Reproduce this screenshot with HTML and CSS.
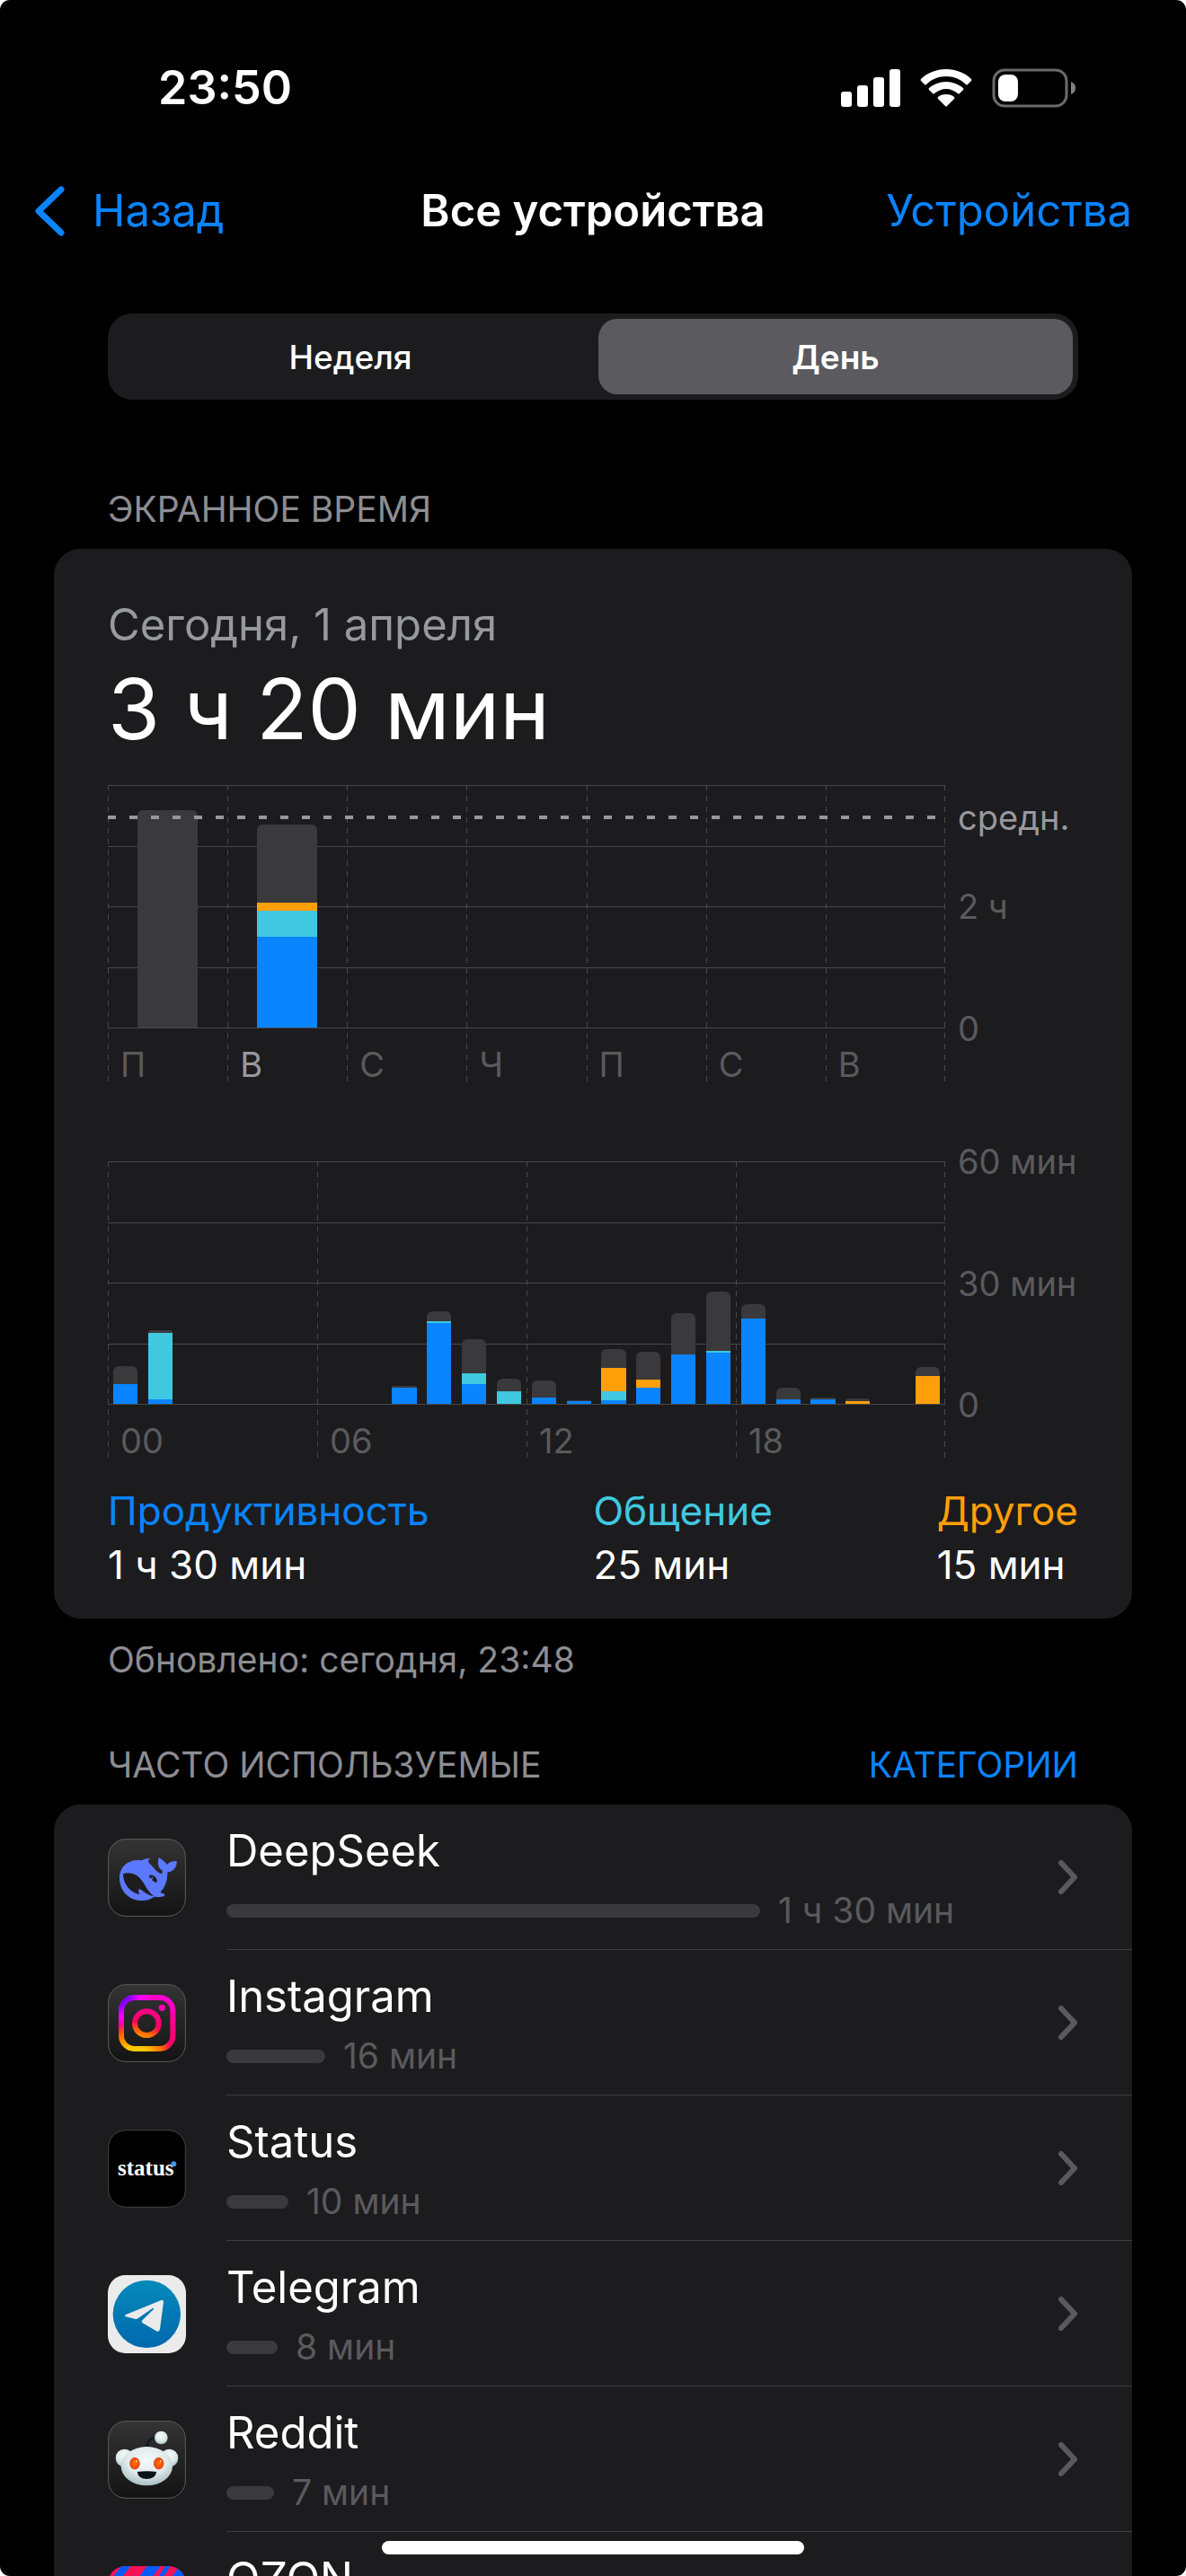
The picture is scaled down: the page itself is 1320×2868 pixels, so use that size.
FILE: index.html
```
<!DOCTYPE html>
<html lang="ru">
	<head>
		<meta charset="utf-8">
		<meta name="viewport" content="width=device-width, initial-scale=1">
		<title>Экранное время</title>
		<link rel="stylesheet" href="styles.css">
	</head>
	<body>
		<div class="screen">
		<div class="status">
			<span class="time">23:50</span>
			<div class="status-icons">
				<svg class="signal" viewBox="0 0 66 42">
					<rect x="0" y="25" width="12" height="17" rx="3"/>
					<rect x="18" y="18" width="12" height="24" rx="3"/>
					<rect x="36" y="9" width="12" height="33" rx="3"/>
					<rect x="54" y="0" width="12" height="42" rx="3"/>
				</svg>
				<svg class="wifi" viewBox="0 0 58 42">
					<path d="M29 0C40 0 50 4 57 11Q58 12 57 13L53 17Q52 18 51 17C45 11 37 8 29 8S13 11 7 17Q6 18 5 17L1 13Q0 12 1 11C8 4 18 0 29 0Z"/>
					<path d="M29 14C36 14 43 17 48 21Q49 22 48 23L44 27Q43 28 42 27C38 24 34 22 29 22S20 24 16 27Q15 28 14 27L10 23Q9 22 10 21C15 17 22 14 29 14Z"/>
					<path d="M29 28C33 28 36 29 38 31Q39 32 38 33L30 41Q29 42 28 41L20 33Q19 32 20 31C22 29 25 28 29 28Z"/>
				</svg>
				<svg class="battery" viewBox="0 0 94 44">
					<rect x="2" y="2" width="81" height="40" rx="12" fill="none" stroke="#6b6b6b" stroke-width="3"/>
					<rect x="7" y="7" width="22" height="30" rx="8"/>
					<path d="M88 15C92 17 93 19 93 22S92 27 88 29Z" fill="#808080"/>
				</svg>
			</div>
		</div>

		<header class="nav">
			<a href="#" class="back">
				<svg viewBox="0 0 34 56"><path d="M30 4L5 28L30 52"/></svg>Назад
			</a>
			<h1>Все устройства</h1>
			<a href="#" class="devices">Устройства</a>
		</header>

		<main>
			<div class="tabs">
				<button type="button">Неделя</button>
				<button type="button" class="ac">День</button>
			</div>

			<div class="head"><h2>ЭКРАННОЕ ВРЕМЯ</h2></div>
			<section class="card summary">
				<p class="date">Сегодня, 1 апреля</p>
				<p class="total">3 ч 20 мин</p>

				<div class="chart week">
					<div class="lines"><i></i><i></i><i></i><i></i></div>
					<div class="cols">
						<span>П</span><span class="ac">В</span><span>С</span><span>Ч</span><span>П</span><span>С</span><span>В</span>
					</div>
					<div class="bars" id="week"></div>
					<div class="axis"><span>2 ч</span><span>0</span></div>
					<div class="avg"><span>средн.</span></div>
				</div>

				<div class="chart day">
					<div class="lines"><i></i><i></i><i></i><i></i></div>
					<div class="cols">
						<span>00</span><span>06</span><span>12</span><span>18</span>
					</div>
					<div class="bars" id="day"></div>
					<div class="axis"><span>60 мин</span><span>30 мин</span><span>0</span></div>
				</div>

				<dl class="legend">
					<div><dt class="blue">Продуктивность</dt><dd>1 ч 30 мин</dd></div>
					<div><dt class="cyan">Общение</dt><dd>25 мин</dd></div>
					<div><dt class="orange">Другое</dt><dd>15 мин</dd></div>
				</dl>
			</section>
			<p class="updated">Обновлено: сегодня, 23:48</p>

			<div class="head often"><h2>ЧАСТО ИСПОЛЬЗУЕМЫЕ</h2><a href="#">КАТЕГОРИИ</a></div>
			<section class="card apps">
				<a href="#" class="app">
					<svg class="icon" viewBox="0 0 261 261">
						<defs>
							<linearGradient id="dark" x1="0" y1="0" x2="0" y2="1"><stop offset="0" stop-color="#343434"/><stop offset="1" stop-color="#131313"/></linearGradient>
						</defs>
						<rect x="2" y="2" width="257" height="257" rx="58" fill="url(#dark)" stroke="#5c5c5c" stroke-width="3"/>
						<path fill="#5b78ff" d="M141 66C131 65 122 68 113 73C73 66 39 91 39 131C39 175 72 207 113 207C130 207 144 202 156 194C166 196 178 196 187 193C192 191 191 186 186 184L175 180C191 163 200 138 199 113C220 110 232 94 230 75C218 74 205 78 197 87C191 74 180 72 172 62C164 76 166 97 182 107C183 114 181 118 177 117C160 109 151 93 139 83C133 78 134 72 141 66Z"/>
						<path fill="#1d1d1d" d="M51 118C72 111 93 117 107 132C124 150 132 178 153 191C135 193 119 173 104 168C100 175 104 184 109 187C74 182 51 151 51 118Z"/>
						<path fill="#1d1d1d" d="M138 124C149 116 166 130 165 145C158 148 152 143 148 139L150 130C147 125 142 126 142 132C138 131 137 127 138 124Z"/>
						<circle cx="144" cy="130" r="3" fill="#1d1d1d"/>
					</svg>
					<div class="info">
						<span class="name">DeepSeek</span>
						<span class="usage"><i style="width:594px"></i>1 ч 30 мин</span>
					</div>
					<svg class="arrow" viewBox="0 0 22 38"><path d="M3 3L18 19L3 35"/></svg>
				</a>
				<a href="#" class="app">
					<svg class="icon" viewBox="0 0 261 261">
						<defs>
							<radialGradient id="ig" gradientUnits="userSpaceOnUse" cx="95" cy="245" r="235">
								<stop offset="0" stop-color="#ffd000"/><stop offset=".18" stop-color="#ffc400"/><stop offset=".38" stop-color="#ff6a00"/><stop offset=".52" stop-color="#ff0060"/><stop offset=".78" stop-color="#ff00a0"/><stop offset="1" stop-color="#ff00e0"/>
							</radialGradient>
							<radialGradient id="ig2" gradientUnits="userSpaceOnUse" cx="40" cy="40" r="115">
								<stop offset="0" stop-color="#6a00ff"/><stop offset=".3" stop-color="#8c00ff"/><stop offset=".6" stop-color="#f0f"/><stop offset="1" stop-color="#f0f" stop-opacity="0"/>
							</radialGradient>
						</defs>
						<rect x="2" y="2" width="257" height="257" rx="58" fill="url(#dark)" stroke="#5c5c5c" stroke-width="3"/>
						<g fill="none" stroke="url(#ig)" stroke-width="18">
							<rect x="45" y="45" width="172" height="171" rx="44"/>
							<circle cx="130" cy="131" r="40"/>
						</g>
						<rect x="45" y="45" width="172" height="171" rx="44" fill="none" stroke="url(#ig2)" stroke-width="18"/>
						<circle cx="181" cy="79" r="11" fill="#ff00b8"/>
					</svg>
					<div class="info">
						<span class="name">Instagram</span>
						<span class="usage"><i style="width:110px"></i>16 мин</span>
					</div>
					<svg class="arrow" viewBox="0 0 22 38"><path d="M3 3L18 19L3 35"/></svg>
				</a>
				<a href="#" class="app">
					<svg class="icon" viewBox="0 0 261 261">
						<rect x="2" y="2" width="257" height="257" rx="58" fill="#000" stroke="#444" stroke-width="3"/>
						<text class="logo" x="33" y="152">status</text>
						<circle cx="220" cy="115" r="9" fill="#3a96f0"/>
					</svg>
					<div class="info">
						<span class="name">Status</span>
						<span class="usage"><i style="width:69px"></i>10 мин</span>
					</div>
					<svg class="arrow" viewBox="0 0 22 38"><path d="M3 3L18 19L3 35"/></svg>
				</a>
				<a href="#" class="app">
					<svg class="icon" viewBox="0 0 261 261">
						<defs>
							<linearGradient id="tg" x1="0" y1="0" x2="0" y2="1"><stop offset="0" stop-color="#058abb"/><stop offset="1" stop-color="#0068ad"/></linearGradient>
						</defs>
						<rect width="261" height="261" rx="59" fill="#ebebeb"/>
						<circle cx="130" cy="130" r="113" fill="url(#tg)"/>
						<path fill="#ebebeb" d="M60 132L178 84Q187 81 186 91L174 180Q172 192 162 187L116 160Q111 156 115 151L153 114Q155 109 149 111L100 145Q96 148 90 146L61 139Q54 136 60 132Z"/>
					</svg>
					<div class="info">
						<span class="name">Telegram</span>
						<span class="usage"><i style="width:57px"></i>8 мин</span>
					</div>
					<svg class="arrow" viewBox="0 0 22 38"><path d="M3 3L18 19L3 35"/></svg>
				</a>
				<a href="#" class="app">
					<svg class="icon" viewBox="0 0 261 261">
						<defs>
							<radialGradient id="snoo" cx=".5" cy=".35" r=".65"><stop offset="0" stop-color="#f4f9f9"/><stop offset=".6" stop-color="#dfeaeb"/><stop offset="1" stop-color="#a9bfc4"/></radialGradient>
							<radialGradient id="eye" cx=".5" cy=".5" r=".5"><stop offset="0" stop-color="#ff7a00"/><stop offset="1" stop-color="#ff3c00"/></radialGradient>
						</defs>
						<rect x="2" y="2" width="257" height="257" rx="58" fill="url(#dark)" stroke="#5c5c5c" stroke-width="3"/>
						<circle cx="56" cy="125" r="30" fill="url(#snoo)"/>
						<circle cx="205" cy="125" r="30" fill="url(#snoo)"/>
						<path d="M130 92C131 68 142 57 164 56" fill="none" stroke="#0b1c22" stroke-width="7"/>
						<circle cx="178" cy="57" r="22" fill="url(#snoo)"/>
						<ellipse cx="130" cy="152" rx="86" ry="65" fill="url(#snoo)"/>
						<ellipse cx="90" cy="143" rx="16" ry="19" fill="url(#eye)" stroke="#c9401c" stroke-width="2"/>
						<ellipse cx="170" cy="143" rx="16" ry="19" fill="url(#eye)" stroke="#c9401c" stroke-width="2"/>
						<circle cx="96" cy="136" r="3" fill="#ffe0d0"/>
						<circle cx="176" cy="136" r="3" fill="#ffe0d0"/>
						<path d="M98 171Q130 166 163 171Q158 195 130 195T98 171Z" fill="#0d1418"/>
					</svg>
					<div class="info">
						<span class="name">Reddit</span>
						<span class="usage"><i style="width:53px"></i>7 мин</span>
					</div>
					<svg class="arrow" viewBox="0 0 22 38"><path d="M3 3L18 19L3 35"/></svg>
				</a>
				<a href="#" class="app">
					<svg class="icon" viewBox="0 0 261 261">
						<defs><clipPath id="oz"><rect width="261" height="261" rx="59"/></clipPath></defs>
						<g clip-path="url(#oz)">
							<rect width="261" height="261" fill="#f91155"/>
							<path fill="#005bff" d="M45 0H76L30 60H0ZM130 0H176L120 74H78ZM192 0H209L170 60H152ZM240 0H261V60H196Z"/>
						</g>
					</svg>
					<div class="info">
						<span class="name">OZON</span>
					</div>
					<svg class="arrow" viewBox="0 0 22 38"><path d="M3 3L18 19L3 35"/></svg>
				</a>
			</section>
		</main>
		<div class="home"></div>
		</div>

		<script type="text/javascript">
			// heights: [blue, cyan, orange, gray]
			var week = [[0,0,0,242],[101,29,9,87],[],[],[],[],[]],
				day = [
					[22,0,0,20],[5,74,0,3],[],[],[],[],[],[],
					[18,0,0,2],[90,2,0,11],[22,12,0,38],[0,14,0,14],
					[7,0,0,19],[3,0,0,1],[4,10,26,21],[18,0,9,31],
					[55,0,0,46],[57,2,0,66],[95,0,0,16],[5,0,0,13],
					[5,0,0,2],[0,0,3,3],[],[0,0,31,10]
				],
				names = ["blue","cyan","orange","gray"];

			function draw(id, data){
				var box = document.querySelector(id);
				for(var i = 0; i < data.length; i++){
					var bar = document.createElement("div");
					bar.className = "bar";
					for(var j = data[i].length - 1; j >= 0; j--){
						if(!data[i][j]) continue;
						var part = document.createElement("i");
						part.className = names[j];
						part.style.height = data[i][j] + "px";
						bar.appendChild(part);
					}
					box.appendChild(bar);
				}
			}

			draw("#week", week);
			draw("#day", day);
		</script>
	</body>
</html>
```

FILE: styles.css
```
*{margin: 0; padding: 0; box-sizing: border-box;}
body{background: #fff; color: #fff;
font-family: Inter, "Liberation Sans", sans-serif; font-size: 49px; line-height: 60px;}
a{color: #0a84ff; text-decoration: none;}
h1,h2{font-size: inherit; font-weight: 400;}
svg{display: block; flex: none;}
.screen{height: 100vh; overflow: hidden; border-radius: 11px; background: #000;}

.status{display: flex; justify-content: space-between; align-items: center;
height: 150px; padding: 45px 122px 0 176px;}
.time{font-size: 52px; font-weight: 600;}
.status-icons{display: flex; align-items: center; gap: 22px; fill: #fff;}
.signal{width: 66px; height: 42px;}
.wifi{width: 58px; height: 42px;}
.battery{width: 94px; height: 44px;}

.nav{display: grid; grid-template-columns: 1fr auto 1fr; align-items: center;
height: 170px; padding: 0 60px;}
.nav h1{font-weight: 600;}
.back{display: flex; align-items: center; gap: 31px; margin-left: -22px;}
.back svg{width: 34px; height: 56px;}
.back path{fill: none; stroke: #0a84ff; stroke-width: 7; stroke-linecap: round; stroke-linejoin: round;}
.devices{text-align: right;}

main{padding: 29px 60px 0;}
.tabs{display: flex; gap: 12px; height: 96px; margin: 0 60px; padding: 6px; border-radius: 27px; background: #1c1c1e;}
.tabs button{flex: 1; border: 0; border-radius: 21px; background: none; color: #fff;
font-family: inherit; font-size: 37px; font-weight: 500;}
.tabs .ac{background: #5b5a5f; font-weight: 600;}

.head{display: flex; justify-content: space-between; margin: 98px 60px 20px;
font-size: 39px; line-height: 48px; color: #8d8d93;}
.often{margin-top: 69px;}
.card{border-radius: 30px; background: #1c1c1e;}
.summary{padding: 55px 60px 30px;}
.date{color: #98989f;}
.total{font-size: 94px; line-height: 126px;}

.chart{display: grid; grid-template-columns: 1fr 148px; grid-template-rows: 271px 60px;
font-size: 38px; line-height: 48px; color: #5a5a5e;}
.week{margin-top: 22px;}
.day{margin-top: 88px;}
.lines{grid-area: 1 / 1; display: flex; flex-direction: column; border-bottom: 1px solid #48484a;}
.lines i{flex: 1; border-top: 1px solid #48484a;}
.cols{grid-area: 1 / 1 / 3 / 2; display: flex;
background: repeating-linear-gradient(#48484a 0 6px, transparent 6px 12px) right / 1px 100% no-repeat;}
.cols span{flex: 1; padding: 287px 0 0 14px; height: 331px;
background: repeating-linear-gradient(#48484a 0 6px, transparent 6px 12px) left / 1px 100% no-repeat;}
.cols .ac{color: #98989f;}
.bars{grid-area: 1 / 1; display: flex; padding-bottom: 1px;}
.bar{flex: 1; display: flex; flex-direction: column; justify-content: flex-end;}
.bar i{display: block; margin: 0 15%;}
.week .bar i{margin: 0 25%;}
.bar i:first-child{border-radius: 6px 6px 0 0;}
i.blue{background: #0a84ff;}
i.cyan{background: #40c8e0;}
i.orange{background: #ff9f0a;}
i.gray{background: #3a3a3c;}
.axis{grid-area: 1 / 2; display: flex; flex-direction: column; justify-content: space-between;
margin: -24px 0; padding-left: 14px;}
.week .axis{margin-top: 111px;}
.avg{grid-area: 1 / 1 / 2 / 3; display: grid; grid-template-columns: 1fr 134px; gap: 14px;
align-items: center; height: 48px; margin-top: 12px; color: #98989f;}
.avg::before{content: ""; height: 4px;
background: repeating-linear-gradient(90deg, #98989a 0 9px, transparent 9px 24px);}

.legend{display: flex; justify-content: space-between; margin-top: 28px; font-size: 44px;}
dt.blue{color: #0a84ff;}
dt.cyan{color: #40c8e0;}
dt.orange{color: #ff9f0a;}
.updated{margin: 22px 60px 0; font-size: 39px; line-height: 48px; color: #8d8d93;}

.app{display: flex; align-items: center; height: 162px; padding: 0 60px; color: #fff;}
.icon{width: 87px; height: 87px; margin-right: 45px;}
.logo{font: bold 75px "Liberation Serif", serif; fill: #fff;}
.info{flex: 1; display: flex; flex-direction: column; gap: 12px; height: 162px; padding-top: 22px;
border-bottom: 1px solid #3d3d40; margin-right: -82px;}
.usage{display: flex; align-items: center; gap: 20px; font-size: 39px; line-height: 48px; color: #5a5a5e;}
.usage i{height: 15px; border-radius: 8px; background: #3a3a3c;}
.arrow{width: 22px; height: 38px;}
.arrow path{fill: none; stroke: #5a5a5e; stroke-width: 6; stroke-linecap: round; stroke-linejoin: round;}

.home{position: fixed; left: 50%; bottom: 24px; width: 470px; height: 15px; margin-left: -235px;
border-radius: 8px; background: #fff;}
```
